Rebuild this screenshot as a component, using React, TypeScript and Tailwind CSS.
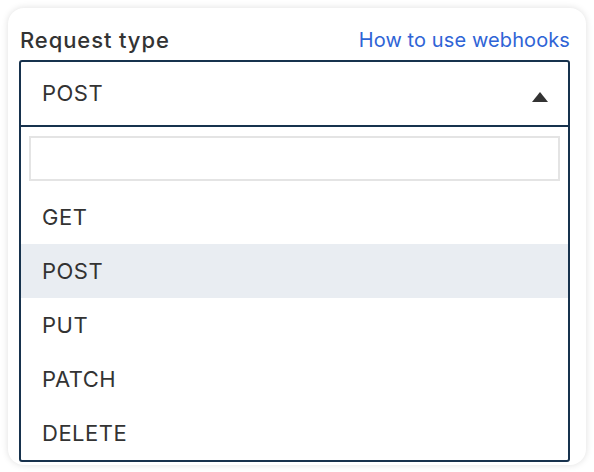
import { useState } from 'react';

const METHODS = ['GET', 'POST', 'PUT', 'PATCH', 'DELETE'];

export default function App() {
  const [selected, setSelected] = useState('POST');
  const [query, setQuery] = useState('');

  const visible = METHODS.filter((method) => method.toLowerCase().includes(query.toLowerCase()));

  return (
    <div className="min-h-screen bg-white p-2 font-['Inter',sans-serif] text-[#333333]">
      <div className="flex h-[457px] w-[578px] flex-col rounded-2xl bg-white pl-[11px] pr-[16px] pt-[18px] shadow-[0_0_7px_rgba(0,0,0,0.13)]">
        <div className="mb-[6px] flex h-[28px] items-center justify-between pl-[1px]">
          <label className="text-[22px] font-medium leading-none tracking-[0.9px]">Request type</label>
          <a href="#" className="text-[20px] leading-none tracking-[0.1px] text-[#2f64d6]">
            How to use webhooks
          </a>
        </div>

        <div className="flex flex-col rounded-[3px] border-2 border-[#17324d]">
          <button
            type="button"
            className="flex h-[65px] items-center justify-between border-b-2 border-[#17324d] pl-[21px] pr-[20px] text-left text-[22px] tracking-[0.5px]"
          >
            <span>{selected}</span>
            <svg width="16" height="10" viewBox="0 0 16 10" className="mt-[7px] fill-[#333333]">
              <path d="M8 0L16 10H0Z" />
            </svg>
          </button>

          <div className="px-[8px] pt-[9px] pb-[9px]">
            <input
              type="text"
              value={query}
              onChange={(event) => setQuery(event.target.value)}
              className="h-[45px] w-full border-2 border-[#e4e4e4] px-2 text-[20px] outline-none"
            />
          </div>

          <ul>
            {visible.map((method) => (
              <li
                key={method}
                onClick={() => setSelected(method)}
                className={`flex h-[54px] cursor-pointer items-center pl-[21px] text-[22px] tracking-[0.5px] ${
                  method === selected ? 'bg-[#e9edf2]' : ''
                }`}
              >
                {method}
              </li>
            ))}
          </ul>
        </div>
      </div>
    </div>
  );
}
